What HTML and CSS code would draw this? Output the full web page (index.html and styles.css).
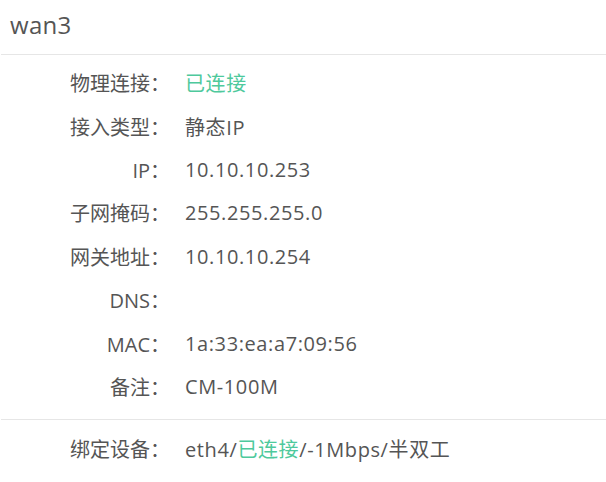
FILE: index.html
```html
<!DOCTYPE html>
<html lang="zh">
<head>
<meta charset="utf-8">
<link rel="stylesheet" href="styles.css">
</head>
<body>
<div class="panel">
  <div class="header">wan3</div>
  <div class="section">
    <div class="row"><span class="label">物理连接：</span><span class="value ok">已连接</span></div>
    <div class="row"><span class="label">接入类型：</span><span class="value">静态IP</span></div>
    <div class="row"><span class="label">IP：</span><span class="value">10.10.10.253</span></div>
    <div class="row"><span class="label">子网掩码：</span><span class="value">255.255.255.0</span></div>
    <div class="row"><span class="label">网关地址：</span><span class="value">10.10.10.254</span></div>
    <div class="row"><span class="label">DNS：</span><span class="value"></span></div>
    <div class="row"><span class="label">MAC：</span><span class="value">1a:33:ea:a7:09:56</span></div>
    <div class="row"><span class="label">备注：</span><span class="value">CM-100M</span></div>
  </div>
  <div class="section bind">
    <div class="row"><span class="label">绑定设备：</span><span class="value">eth4/<span class="ok">已连接</span>/-1Mbps/半双工</span></div>
  </div>
</div>
</body>
</html>
```
FILE: styles.css
```css
* { box-sizing: border-box; }
html, body { margin: 0; padding: 0; background: #fff; }
body {
  font-family: "Open Sans", "Noto Sans CJK SC", sans-serif;
  color: #555;
  width: 606px;
}
.panel { padding-left: 1px; }
.header {
  height: 55px;
  padding: 8px 0 0 9px;
  font-size: 24px;
  line-height: 34px;
  letter-spacing: 0.3px;
  border-bottom: 1px solid #e6e6e6;
}
.section {
  padding: 6px 0 11px;
}
.bind {
  border-top: 1px solid #e6e6e6;
  padding-top: 6px;
}
.row {
  display: flex;
  align-items: center;
  height: 43.43px;
  font-size: 20px;
}
.label {
  width: 169px;
  text-align: right;
  flex: none;
  margin-right: 15px;
}
.value {
  white-space: nowrap;
  letter-spacing: 0.6px;
}
.ok { color: #4ec99c; }
```
